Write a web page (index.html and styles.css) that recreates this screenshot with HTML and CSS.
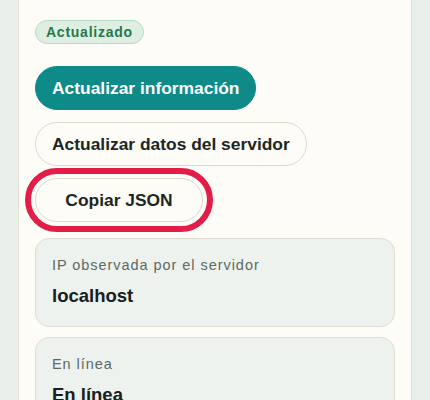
FILE: index.html
```html
<!DOCTYPE html>
<html lang="es">
<head>
<meta charset="utf-8">
<title>Estado</title>
<link rel="stylesheet" href="styles.css">
</head>
<body>
<div class="page">
  <main class="panel">
    <span class="badge">Actualizado</span>
    <div class="actions">
      <button class="btn btn-primary" type="button">Actualizar información</button>
      <button class="btn" type="button">Actualizar datos del servidor</button>
      <div class="highlight-wrap">
        <button class="btn btn-copy" type="button">Copiar JSON</button>
        <span class="highlight-ring"></span>
      </div>
    </div>
    <div class="cards">
      <section class="card">
        <div class="card-label">IP observada por el servidor</div>
        <div class="card-value">localhost</div>
      </section>
      <section class="card">
        <div class="card-label">En línea</div>
        <div class="card-value">En línea</div>
      </section>
    </div>
  </main>
</div>
</body>
</html>
```
FILE: styles.css
```css
html, body {
  margin: 0;
  padding: 0;
}
body {
  font-family: "Liberation Sans", Arial, sans-serif;
  background-color: #e9efeb;
  background-image: radial-gradient(rgba(255,255,255,0.6) 0.8px, transparent 1px);
  background-size: 9px 9px;
  color: #1c2623;
  min-height: 400px;
}
.page {
  padding: 0 18px;
}
.panel {
  display: flex;
  flex-direction: column;
  align-items: flex-start;
  background: #fdfcf7;
  border-left: 1px solid #e1ded4;
  border-right: 1px solid #e1ded4;
  padding: 20px 16px 24px;
  min-height: 400px;
  box-sizing: border-box;
}
.badge {
  display: inline-block;
  box-sizing: border-box;
  height: 24px;
  line-height: 22px;
  padding: 0 10px;
  border: 1px solid #b8d9c2;
  background: #dfeee3;
  color: #1f7a4b;
  border-radius: 999px;
  font-size: 14px;
  letter-spacing: 0.75px;
  font-weight: 700;
}
.actions {
  margin-top: 22px;
  display: flex;
  flex-direction: column;
  align-items: flex-start;
  gap: 12px;
}
.btn {
  box-sizing: border-box;
  height: 44px;
  padding: 0 16px;
  border: 1px solid #dcdad0;
  background: #fdfcf7;
  color: #1c2623;
  border-radius: 999px;
  font-family: inherit;
  font-size: 17.4px;
  font-weight: 700;
  cursor: pointer;
}
.btn-primary {
  background: #0e8a89;
  border-color: #0e8a89;
  color: #ffffff;
}
.btn-copy {
  width: 168px;
}
.highlight-wrap {
  position: relative;
  display: flex;
}
.highlight-ring {
  position: absolute;
  top: -10px;
  left: -10px;
  right: -10px;
  bottom: -10px;
  border: 6px solid #e11d48;
  border-radius: 999px;
  pointer-events: none;
}
.cards {
  margin-top: 16px;
  align-self: stretch;
  display: flex;
  flex-direction: column;
  gap: 10px;
}
.card {
  border: 1px solid #dfddd2;
  background: #eef2ee;
  border-radius: 14px;
  padding: 16px 16px 17px;
}
.card-label {
  font-size: 14.5px;
  line-height: 20px;
  letter-spacing: 0.95px;
  color: #5b6a63;
}
.card-value {
  margin-top: 8px;
  font-size: 18.5px;
  line-height: 26px;
  font-weight: 700;
  color: #17201d;
}
```
